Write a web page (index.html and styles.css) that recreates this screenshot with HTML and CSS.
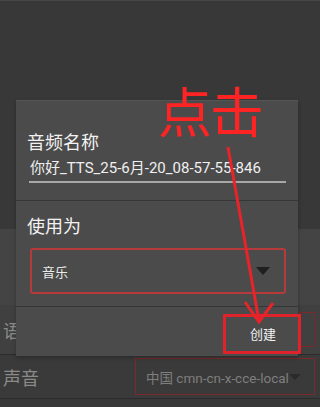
FILE: index.html
```html
<!DOCTYPE html>
<html lang="zh">
<head>
<meta charset="utf-8">
<link rel="stylesheet" href="styles.css">
</head>
<body>
<div class="page">
  <div class="top-space"></div>
  <div class="band"></div>
  <div class="row row-lang">
    <span class="row-label">语言</span>
    <div class="row-box"></div>
  </div>
  <div class="row row-voice">
    <span class="row-label">声音</span>
    <div class="row-box">
      <span class="row-value">中国 cmn-cn-x-cce-local</span>
      <span class="tri tri-dim"></span>
    </div>
  </div>
  <div class="rest"></div>

  <div class="dialog">
    <div class="section section-name">
      <div class="sec-title">音频名称</div>
      <div class="input">你好_TTS_25-6月-20_08-57-55-846</div>
    </div>
    <div class="section section-use">
      <div class="sec-title">使用为</div>
      <div class="spinner">
        <span class="spinner-text">音乐</span>
        <span class="tri"></span>
      </div>
    </div>
    <div class="actions">
      <button class="btn">创建</button>
    </div>
  </div>

  <div class="hl-box"></div>
  <div class="annot">点击</div>
  <svg class="arrow" width="320" height="407" viewBox="0 0 320 407">
    <line x1="228" y1="146" x2="259" y2="320" stroke="#e8232a" stroke-width="3"/>
    <polyline points="245,301 259,321 273,302" fill="none" stroke="#e8232a" stroke-width="3" stroke-linejoin="miter"/>
  </svg>
</div>
</body>
</html>
```

FILE: styles.css
```css
* { box-sizing: border-box; }
html, body {
  margin: 0;
  padding: 0;
  background: #383838;
}
body {
  font-family: Roboto, "Noto Sans CJK SC", sans-serif;
  width: 320px;
  height: 407px;
  overflow: hidden;
}
.page {
  position: relative;
  width: 320px;
  height: 407px;
  display: flex;
  flex-direction: column;
  border-top: 1px solid #474747;
}
.top-space { height: 228px; background: #383838; }
.band { height: 76px; background: #444444; }
.row {
  display: flex;
  align-items: center;
  justify-content: space-between;
  padding-left: 3px;
  padding-right: 5px;
  border-bottom: 1px solid #2c2c2c;
}
.row-lang { height: 50px; background: #404040; }
.row-voice { height: 44px; background: #3a3a3a; }
.row-label {
  font-family: "Noto Sans CJK SC", sans-serif;
  font-size: 18px;
  color: #8a8a8a;
}
.row-box {
  width: 180px;
  border: 1px solid #7a2a2a;
  display: flex;
  align-items: center;
  padding-left: 10px;
  gap: 0;
}
.row-lang .row-box { height: 35px; margin-top: 0; }
.row-voice .row-box { height: 37px; }
.row-value {
  font-size: 13.5px;
  color: #7e7e7e;
  font-family: Roboto, "Noto Sans CJK SC", sans-serif;
}
.rest { flex: 1; background: #383838; }

.tri {
  width: 0;
  height: 0;
  border-left: 7px solid transparent;
  border-right: 7px solid transparent;
  border-top: 8px solid #1f1f1f;
}
.tri-dim { border-top-color: #2a2a2a; border-left-width: 6px; border-right-width: 6px; border-top-width: 6px; }

.dialog {
  position: absolute;
  left: 16px;
  top: 99px;
  width: 282px;
  height: 256px;
  background: #4b4b4b;
  border-top: 1px solid #555;
  display: flex;
  flex-direction: column;
  box-shadow: 0 2px 4px rgba(0,0,0,0.25);
}
.section {
  padding: 0 12px 0 11px;
  border-bottom: 1px solid #363636;
}
.section-name { height: 100px; padding-top: 27px; }
.section-use { height: 106px; padding-top: 11px; }
.sec-title {
  font-family: "Noto Sans CJK SC", sans-serif;
  font-size: 18px;
  line-height: 26px;
  color: #f2f2f2;
}
.input {
  margin-top: 3px;
  margin-left: 2px;
  width: 257px;
  font-size: 15px;
  line-height: 22px;
  color: #f0f0f0;
  border-bottom: 2px solid #a8a8a8;
  padding-bottom: 2px;
  padding-left: 1px;
  white-space: nowrap;
}
.spinner {
  margin-top: 10px;
  margin-left: 3px;
  width: 256px;
  height: 46px;
  border: 2px solid #b63a3a;
  border-radius: 3px;
  display: flex;
  align-items: center;
  justify-content: space-between;
  padding: 0 14px 0 10px;
}
.spinner-text {
  font-family: "Noto Sans CJK SC", sans-serif;
  font-size: 13px;
  color: #ececec;
}
.actions {
  flex: 1;
  display: flex;
  justify-content: flex-end;
  align-items: center;
  padding-right: 22px;
}
.btn {
  background: transparent;
  border: none;
  color: #f2f2f2;
  font-family: "Noto Sans CJK SC", sans-serif;
  font-size: 13px;
  padding: 0;
  margin-top: 4px;
}

.hl-box {
  position: absolute;
  left: 223px;
  top: 313px;
  width: 78px;
  height: 40px;
  border: 3px solid #e0232b;
}
.annot {
  position: absolute;
  left: 158px;
  top: 82px;
  font-family: "Noto Sans CJK SC", sans-serif;
  font-size: 54px;
  line-height: 1;
  color: #ff2424;
  letter-spacing: -2px;
}
.arrow {
  position: absolute;
  left: 0;
  top: 0;
  pointer-events: none;
}
```
